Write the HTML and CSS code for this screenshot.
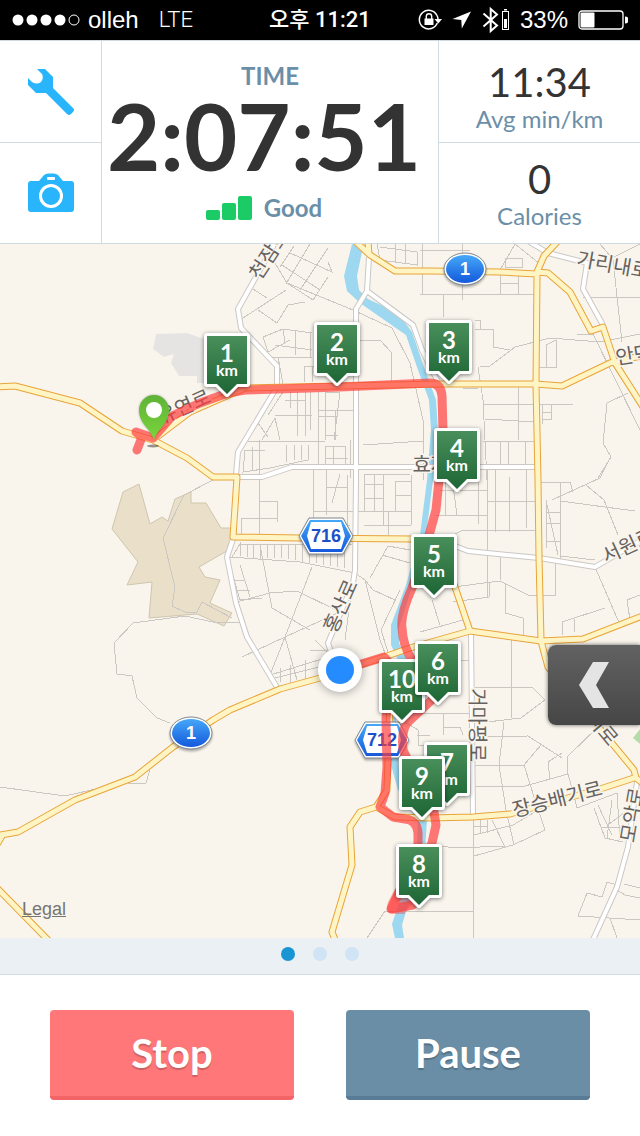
FILE: index.html
```
<!DOCTYPE html>
<html lang="ko">
<head>
    <meta charset="UTF-8">
    <meta name="viewport" content="width=device-width, initial-scale=1">
    <title>Run Tracker</title>
    <link rel="stylesheet" href="styles.css">
</head>
<body>
    <div class="status-bar">
        <div class="status-left">
            <svg width="68" height="12" viewBox="0 0 68 12">
                <g fill="#fff">
                    <circle cx="6" cy="6" r="5.5"/>
                    <circle cx="20" cy="6" r="5.5"/>
                    <circle cx="34" cy="6" r="5.5"/>
                    <circle cx="48" cy="6" r="5.5"/>
                </g>
                <circle cx="62" cy="6" r="5" fill="none" stroke="#fff"/>
            </svg>
            <span class="carrier">olleh</span>
            <span class="network">LTE</span>
        </div>
        <div class="status-time">오후 11:21</div>
        <div class="status-right">
            <svg width="24" height="22" viewBox="0 0 24 22">
                <path d="M19 6.5A9.3 9.3 0 1 0 19.3 14M19 6.5A9 9 0 0 1 20 10" fill="none" stroke="#fff" stroke-width="1.5"/>
                <path d="M16.5 10H24l-3.7 4.5z" fill="#fff"/>
                <rect x="6.5" y="9.500" width="9" height="6.500" fill="#fff"/>
                <path d="M8.300 10V7.500a2.700 2.700 0 0 1 5.400 0V10" fill="none" stroke="#fff" stroke-width="1.400"/>
            </svg>
            <svg width="20" height="18" viewBox="0 0 20 18">
                <path d="M19 0.500 9.800 17.500 9.300 9 0.500 8z" fill="#fff"/>
            </svg>
            <svg width="28" height="28" viewBox="0 0 28 28">
                <path d="M1.500 7.500 15 19.500 8.700 25V3L15 8.500 1.500 20.500" fill="none" stroke="#fff" stroke-width="2"/>
                <rect x="20.500" y="5.500" width="6" height="18" fill="none" stroke="#fff"/>
                <path d="M22 3h3v1.500h-3zM22 13h3v9h-3z" fill="#fff"/>
            </svg>
            <span class="battery-level">33%</span>
            <svg width="50" height="20" viewBox="0 0 50 20">
                <rect x="1" y="1" width="44" height="18" rx="3" fill="none" stroke="#fff" stroke-width="1.300"/>
                <rect x="2.500" y="2.500" width="14" height="15" rx="1" fill="#fff"/>
                <path d="M47 6.500a3.500 3.500 0 0 1 0 7z" fill="#fff"/>
            </svg>
        </div>
    </div>

    <div class="stats">
        <div class="tools">
            <button class="tool" aria-label="Settings">
                <svg width="48" height="48" viewBox="0 0 48 48">
                    <path d="M10 1h8l8 8v11l20 20q2 2 0 4l-2 2q-2 2-4 0L19 25H9L1 17V10l4 4q5 3 9 0 3-4 1-8z" fill="#29b5fb"/>
                </svg>
            </button>
            <button class="tool" aria-label="Camera">
                <svg width="46" height="40" viewBox="0 0 46 40">
                    <path d="M3 8h8l5-6q2-1.500 4-1.500h6q2 0 4 1.500l5 6h8q3 0 3 3v25q0 3-3 3H3q-3 0-3-3V11q0-3 3-3z" fill="#29b5fb"/>
                    <rect x="19" y="4" width="8" height="3" rx="1" fill="#fff"/>
                    <circle cx="23" cy="23" r="10.500" fill="none" stroke="#fff" stroke-width="3"/>
                </svg>
            </button>
        </div>
        <div class="time-panel">
            <div class="time-label">TIME</div>
            <div class="time-value">2:07:51</div>
            <div class="gps">
                <svg width="46" height="24" viewBox="0 0 46 24" fill="#1bcc66">
                    <rect x="0" y="14" width="14" height="10" rx="2"/>
                    <rect x="16" y="7" width="14" height="17" rx="2"/>
                    <rect x="32" y="0" width="14" height="24" rx="2"/>
                </svg>
                <span>Good</span>
            </div>
        </div>
        <div class="side-stats">
            <div class="stat">
                <div class="stat-value">11:34</div>
                <div class="stat-label">Avg min/km</div>
            </div>
            <div class="stat">
                <div class="stat-value">0</div>
                <div class="stat-label">Calories</div>
            </div>
        </div>
    </div>

    <div class="map">
        <svg class="map-canvas" viewBox="0 244 640 694">
            <defs>
                <linearGradient id="pinFill" x1="0" y1="0" x2="0" y2="1">
                    <stop offset="0" stop-color="#488f5b"/>
                    <stop offset="1" stop-color="#1f6636"/>
                </linearGradient>
                <linearGradient id="shieldFill" x1="0" y1="0" x2="0" y2="1">
                    <stop offset="0" stop-color="#45a8f8"/>
                    <stop offset="1" stop-color="#1459dc"/>
                </linearGradient>
                <linearGradient id="startFill" x1="0" y1="0" x2="0" y2="1">
                    <stop offset="0" stop-color="#5fb237"/>
                    <stop offset="1" stop-color="#7ad53c"/>
                </linearGradient>
                <g id="highways">
                    <path d="M-5 387 15 386 80 403 122 431 153 440 187 458 213 477H237L233 537 300 538 412 539 440 545 455 587 470 631"/>
                    <path d="M153 440 190 412 245 388 340 386 440 384H535L562 386 610 363 645 355"/>
                    <path d="M355 241 370 255 395 271H430L500 272 537 274 536 385 538 480 539 557 541 640"/>
                    <path d="M368 241 369 255M558 241 544 256 537 272 548 273 570 292 591 331 603 327 615 363 645 410"/>
                    <path d="M-5 836 18 832 75 800 135 777 173 747 213 720 230 710 280 689 320 678 387 656 410 648 470 631 541 641 583 639 645 615"/>
                    <path d="M-5 848 2 836M-5 886 50 942"/>
                    <path d="M336 942 332 932 352 865 350 827 360 812 376 807 387 790 390 700M376 807 395 817 430 818 473 817 510 814 600 789 634 778"/>
                    <path d="M541 641 548 667 597 725 634 770 636 778 645 785"/>
                </g>
                <g id="roads">
                    <path d="M276 241 238 309 241 328 277 366V387L238 452 236 475"/>
                    <path d="M369 257 367 291 356 309V480L355 570 353 583 328 643 333 658"/>
                    <path d="M367 291 413 325 422 350 438 382M237 477H262L292 467H536"/>
                    <path d="M233 539 227 557 236 603 247 637 278 689"/>
                    <path d="M450 544 468 551 539 558 595 567 645 538M471 633 473 815"/>
                    <path d="M528 241 548 253 587 263 583 289 603 325M637 782 628 847 617 887 592 942"/>
                </g>
                <g id="pin">
                    <path class="pin-outline" d="M-20-58H20V-10H10L0 0-10-10H-20Z"/>
                    <path d="M-20-58H20V-10H10L0 0-10-10H-20Z" fill="url(#pinFill)"/>
                </g>
                <g id="ovalShield">
                    <ellipse class="shield-edge" rx="21" ry="16"/>
                    <ellipse rx="19" ry="14" fill="url(#shieldFill)"/>
                </g>
                <g id="hexShield">
                    <path class="shield-edge" d="M-17-18H17L27 0 17 18H-17L-27 0Z"/>
                    <path d="M-16-16H16L25 0 16 16H-16L-25 0Z" fill="url(#shieldFill)"/>
                    <path d="M-15-14H15L19 0 15 13H-15L-19 0Z" fill="#fff"/>
                </g>
            </defs>

            <!-- land -->
            <path class="land" d="M123 492 139 484 150 524 162 517 168 521 175 499 191 492V503H206L221 528H232V548L199 567 205 577 220 580 210 603 232 613 224 626 197 614 149 618 152 582 127 585 138 562 112 529Z"/>
            <path fill="#e6e4e3" d="M156 334 187 333 215 343V383H197V376H179L171 363 174 354 164 357 153 349Z"/>
            <path fill="#b5dca8" d="M633 738 640 729V744Z"/>

            <!-- river -->
            <path class="river" d="M352 244 363 247 357 276 359 290 368 299 398 313 412 332 425 370 436 400 438 430 433 480 426 536 412 587 399 627V643L408 662 396 720 399 770 408 790 427 820 425 850 408 905 402 925 404 938H395L392 924 400 900 417 850 418 822 398 790 391 765 390 720 399 662 391 645V625L406 585 420 535 427 480 431 430 429 400 418 370 406 335 380 317 360 303 347 291 344 276Z"/>

            <!-- streets -->
            <g class="streets">
                <path d="M294 246 280 267M310 244 286 284M328 248 300 290M328 277 313 300 287 283M290 253 332 272 328 262M282 265 320 290M273 260 287 283 353 310 392 328 410 363 423 420V480M286 290 240 320M258 310 277 323 288 305 305 302M250 287 267 298"/>
                <path d="M263 337 283 329 312 333M263 337 268 352 290 340M275 345 312 350M283 329 285 343M295 330V355M272 357H312M278 357 283 384M310 333V357M360 340H380L391 352V382M304 366V382M312 366V382M304 366H318"/>
                <path d="M283 392 268 415M290 392V408M297 392V436M305 392V436M310 392V430M318 392V470M285 400H305M275 415H312M318 410H355M325 392V440M335 410V440M325 392H340L334 440M318 416H338M325 435H338"/>
                <path d="M258 423 268 437M262 440 275 418 280 440M248 441H325M325 446V469M333 446V469M325 446H345V469M325 458H348M245 450 243 472 270 468 308 460V445M245 450H265M252 447V470M286 445V462M294 445V460M301 445V460M363 445 423 441M350 440V478"/>
                <path d="M422 244V294M420 250H470M420 294H535M500 275V294M518 276V294M500 283H518M462 244V300M443 295V317M500 270 515 244 540 264M505 267V258H522V267ZM377 244 380 260 417 265V252L380 247M395 244V262M405 244V264"/>
                <path d="M475 329H493V347L510 350M475 320H480V329M480 367 490 366 515 347 550 338 600 342 640 334M478 367 483 400 487 480M538 367H556V340M546 367V345L556 340M483 404H535M463 388H478M485 419 535 422M518 385V440M540 404H573M542 404V424M542 412H551V404M542 419H551V412"/>
                <path d="M483 441H535M500 441V466M508 441V466M525 441V466M577 334H593L640 430M607 403 603 443 611 457 598 478M607 403 628 393M583 297H640M613 260 622 342M600 244 612 258 640 244"/>
                <path d="M259 440V535M259 501H277V522M241 535V518H277M313 470V525M326 470V515M340 474 332 503M326 487H347M313 511H412M313 525H350M347 475V525M364 474H410M364 484H383M364 498H383M364 511V474M374 474V511M383 474V525M395 481V511M395 481H411M395 495H411M388 511V535M411 475V525M364 525H411"/>
                <path d="M240 544H352M232 557 240 544V556M247 545V557M253 545V558M260 545V560M267 545V558M274 545V558M281 545V558M288 545V559M295 545V560M302 545V562M309 545V563M316 545V563M323 545V565M330 545V566M337 545V567M344 545V568M230 557 300 562 355 573M260 545 272 608 310 630M233 603 270 593 297 591 340 612 285 637 242 657M312 567 285 637 297 680M230 565 240 600 262 598M240 565 250 597M235 580H245M236 590H250M285 637 270 675 335 655M275 678 335 663M280 668V682M290 665V685M305 660V680M315 640 335 660M310 650H328"/>
                <path d="M355 573 365 580 373 590 395 600M410 550 388 546 370 578M382 555 410 563M365 580 380 640 385 653M353 580 345 640M400 590 381 630 388 652"/>
                <path d="M213 480 184 495 163 538 175 587 172 606 185 612H197L202 602 232 618M240 622 213 622 185 616 133 623 114 643 117 674 132 676 137 698 157 718 170 723M0 787 65 796 100 788M150 770 146 783H128"/>
                <path d="M440 490H487M487 470V597M478 470V524M495 470V532M509 477V532M526 470V528M487 501H537M436 515H487M455 534 463 530H535M540 482H560V560M560 482H570L573 492M546 500V548M546 500 558 555M546 512H560M546 523H560M546 541H560M552 500 600 478 608 462M586 485 604 500 618 535M560 501 635 511"/>
                <path d="M500 556V580M453 587 500 581 528 595H555V563M489 583V597L453 602M505 583V613L523 618V635M562 635V622L605 608M574 619V632M595 567 620 625M640 595 627 600 630 620M511 640V718M473 687H532L545 700 521 718 487 722 475 715M445 480V515M453 485 457 515M420 632 463 620M432 600 440 625M461 660H471M560 556 595 560"/>
                <path d="M420 713H470M443 713V735M443 727H460L463 735M475 737 528 736 562 758M541 745 524 765 535 800 545 830 513 845 474 856M504 722 499 765 506 810 514 845M473 765H524M562 753 548 762 550 780M475 786H525L568 774M600 725 567 757V770L577 808 617 793M474 835 513 825 535 812M480 820V833M487 820V833M474 826H487M492 820 505 847"/>
                <path d="M405 722 418 730V745H430M417 735H430M420 843 455 848 505 846M385 911H473M473 820V938M594 808 605 838 623 842M598 805 612 835M612 800 607 838M617 793 620 840M602 827H625M608 825 625 812M617 885 607 882 602 897 587 893 578 916 640 920M610 918 617 938M624 884 640 888M617 890 625 895 640 898M385 911 367 938"/>
            </g>

            <!-- roads, casing first and surface on top -->
            <use class="road-casing" href="#roads"/>
            <use class="road-surface" href="#roads"/>
            <use class="highway-casing" href="#highways"/>
            <use class="highway-surface" href="#highways"/>

            <g class="road-names">
                <text transform="translate(275 258) rotate(-57)">천잠로</text>
                <text transform="translate(187 413) rotate(-24)">유연로</text>
                <text transform="translate(440 472)">효자로</text>
                <text transform="translate(347 609) rotate(-66)">홍산로</text>
                <text transform="translate(470 725) rotate(90)">거마평로</text>
                <text transform="translate(559 806) rotate(-14)">장승배기로</text>
                <text transform="translate(631 552) rotate(-25)">서원로</text>
                <text transform="translate(612 272) rotate(10)">가리내로</text>
                <text transform="translate(653 359) rotate(-9)">안덕원로</text>
                <text transform="translate(639 816) rotate(-80)">모악로</text>
                <text transform="translate(585 719) rotate(50)">용머리로</text>
            </g>

            <!-- route shields -->
            <g class="oval-label">
                <use href="#ovalShield" x="465" y="269"/>
                <text x="465" y="275">1</text>
                <use href="#ovalShield" x="191" y="733"/>
                <text x="191" y="739">1</text>
            </g>
            <g class="hex-label">
                <use href="#hexShield" x="326" y="536"/>
                <text x="326" y="542">716</text>
                <use href="#hexShield" x="382" y="740"/>
                <text x="382" y="746">712</text>
            </g>

            <!-- run track -->
            <path class="track" d="M137 450 142 437 136 432 153 438 172 416 200 403 228 393 245 390 340 387 430 383Q441 383 442 396L443 430 439 480 436 510 425 550 412 588Q400 615 402 628 403 646 412 660L437 695 407 723Q401 732 403 750L420 785 434 812 436 825 432 843 420 880 413 905 391 909 405 880 418 850 418 833Q417 820 405 819L393 817 380 807 385 793 387 767 386 720Q387 690 400 675L384 657 345 669"/>
            <path class="track-end" d="M405 870 388 902Q384 914 395 914H404L414 902 420 870Z"/>

            <!-- start pin -->
            <ellipse cx="153" cy="446" rx="6" ry="1.500" fill="#000" opacity=".4"/>
            <path class="start-pin" d="M154 440C151 429 139 424 139 410a15 15 0 0 1 30 0c0 14-12 19-15 30z"/>
            <circle cx="154" cy="410" r="8" fill="#fff"/>

            <!-- current position -->
            <circle class="position-ring" cx="340" cy="670" r="22"/>
            <circle cx="340" cy="670" r="14" fill="#258cff"/>

            <!-- kilometre pins -->
            <g class="pins">
                <g transform="translate(227 394)"><use href="#pin"/><text y="-32">1</text><text class="unit" y="-18">km</text></g>
                <g transform="translate(337 383)"><use href="#pin"/><text y="-32">2</text><text class="unit" y="-18">km</text></g>
                <g transform="translate(449 381)"><use href="#pin"/><text y="-32">3</text><text class="unit" y="-18">km</text></g>
                <g transform="translate(457 489)"><use href="#pin"/><text y="-32">4</text><text class="unit" y="-18">km</text></g>
                <g transform="translate(434 595)"><use href="#pin"/><text y="-32">5</text><text class="unit" y="-18">km</text></g>
                <g transform="translate(402 720)"><use href="#pin"/><text y="-32">10</text><text class="unit" y="-18">km</text></g>
                <g transform="translate(438 702)"><use href="#pin"/><text y="-32">6</text><text class="unit" y="-18">km</text></g>
                <g transform="translate(447 803)"><use href="#pin"/><text y="-32">7</text><text class="unit" y="-18">km</text></g>
                <g transform="translate(422 817)"><use href="#pin"/><text y="-32">9</text><text class="unit" y="-18">km</text></g>
                <g transform="translate(419 905)"><use href="#pin"/><text y="-32">8</text><text class="unit" y="-18">km</text></g>
            </g>
        </svg>
        <button class="drawer" aria-label="Open panel">
            <svg width="30" height="46" viewBox="0 0 30 46">
                <path d="M14 0H30L17 23 30 46H14L0 23Z" fill="#e4e4e4"/>
            </svg>
        </button>
        <a class="legal" href="#legal">Legal</a>
    </div>

    <div class="pager">
        <span class="dot active"></span>
        <span class="dot"></span>
        <span class="dot"></span>
    </div>

    <div class="actions">
        <button class="action stop">Stop</button>
        <button class="action pause">Pause</button>
    </div>
</body>
</html>
```
FILE: styles.css
```
* {
    margin: 0;
    padding: 0;
    box-sizing: border-box;
}

body {
    min-height: 100vh;
    display: flex;
    flex-direction: column;
    background-color: #ffffff;
    font-family: Lato, "Noto Sans CJK KR", sans-serif;
}

button {
    border: none;
    background: none;
    font-family: inherit;
    cursor: pointer;
}

/* status bar */
.status-bar {
    height: 40px;
    padding: 0 12px;
    display: grid;
    grid-template-columns: 1fr auto 1fr;
    align-items: center;
    background-color: #000000;
    color: #ffffff;
    font-family: "Liberation Sans", "Noto Sans CJK KR", sans-serif;
    font-size: 24px;
    line-height: 40px;
}

.status-left,
.status-right {
    display: flex;
    align-items: center;
    gap: 8px;
}

.status-right {
    justify-content: flex-end;
    gap: 10px;
}

.network {
    margin-left: 12px;
    font-family: Roboto, sans-serif;
    font-size: 22px;
    font-weight: 300;
}

.status-time {
    font-family: Roboto, "Noto Sans CJK KR", sans-serif;
    font-size: 22px;
    font-weight: 500;
}

/* header stats */
.stats {
    display: grid;
    grid-template-columns: 102px 1fr 202px;
    height: 204px;
    border-top: 1px solid #d0dae1;
    border-bottom: 1px solid #d0dae1;
}

.tools,
.side-stats {
    display: grid;
    grid-template-rows: 102px 1fr;
}

.tools {
    border-right: 1px solid #d0dae1;
}

.side-stats {
    border-left: 1px solid #d0dae1;
}

.tool,
.stat {
    display: flex;
    align-items: center;
    justify-content: center;
}

.tool:first-child,
.stat:first-child {
    border-bottom: 1px solid #d0dae1;
}

.tool svg {
    display: block;
}

.time-panel {
    display: flex;
    flex-direction: column;
    align-items: center;
    justify-content: center;
    color: #6b8fa8;
    font-size: 24px;
    font-weight: 700;
    line-height: 28px;
}

.time-value,
.gps {
    padding-right: 12px;
}

.time-value {
    color: #333333;
    font-size: 92px;
    line-height: 92px;
}

.gps {
    margin-top: 12px;
    display: flex;
    align-items: center;
    gap: 12px;
}

.stat {
    flex-direction: column;
    gap: 2px;
    padding-top: 2px;
}

.stat:first-child {
    padding-top: 10px;
}

.stat-value {
    color: #333333;
    font-size: 40px;
    line-height: 42px;
}

.stat-label {
    color: #6b8fa8;
    font-size: 24px;
    line-height: 28px;
}

/* map */
.map {
    flex: 1;
    position: relative;
    overflow: hidden;
    background-color: #f9f5ed;
}

.map-canvas {
    display: block;
    width: 100%;
}

.land {
    fill: #eadfc8;
    stroke: #cfc6b0;
}

.river {
    fill: #9dd8f0;
}

.streets {
    fill: none;
    stroke: #cbc8c3;
    shape-rendering: crispEdges;
}

.road-casing,
.road-surface,
.highway-casing,
.highway-surface {
    fill: none;
    stroke-linejoin: round;
}

.road-casing {
    stroke: #cbc8c5;
    stroke-width: 6px;
}

.road-surface {
    stroke: #ffffff;
    stroke-width: 4px;
}

.highway-casing {
    stroke: #e8a43a;
    stroke-width: 7px;
}

.highway-surface {
    stroke: #fff4c4;
    stroke-width: 5px;
}

.road-names {
    fill: #66625f;
    stroke: #f9f5ed;
    stroke-width: 3px;
    paint-order: stroke;
    font-family: "Noto Sans CJK KR", sans-serif;
    font-size: 20px;
    text-anchor: middle;
}

.shield-edge {
    fill: #ffffff;
    stroke: #7d858f;
    filter: drop-shadow(0 2px 1px rgba(0,0,0,0.3));
}

.oval-label,
.hex-label {
    font-family: "Liberation Sans", sans-serif;
    font-size: 18px;
    font-weight: 700;
    text-anchor: middle;
}

.oval-label {
    fill: #ffffff;
}

.hex-label {
    fill: #1c50c8;
}

.track {
    fill: none;
    stroke: #ff3a3a;
    stroke-width: 9px;
    stroke-linecap: round;
    stroke-linejoin: round;
    opacity: 0.68;
}

.track-end {
    fill: #ff3a3a;
    opacity: 0.4;
}

.start-pin {
    fill: url(#startFill);
    filter: drop-shadow(0 0 1px rgba(0,0,0,0.3));
}

.position-ring {
    fill: #ffffff;
    filter: drop-shadow(0 1px 5px rgba(0,0,0,0.35));
}

.pin-outline {
    fill: #ffffff;
    stroke: #ffffff;
    stroke-width: 6px;
    stroke-linejoin: round;
    filter: drop-shadow(0 1px 2px rgba(0,0,0,0.5));
}

.pins {
    fill: #ffffff;
    font-size: 24px;
    font-weight: 700;
    text-anchor: middle;
}

.unit {
    font-size: 16px;
}

.drawer {
    position: absolute;
    right: 0;
    bottom: 213px;
    width: 92px;
    height: 80px;
    display: flex;
    align-items: center;
    justify-content: center;
    border-radius: 8px 0 0 8px;
    background: linear-gradient(#626262, #464646);
    box-shadow: 0 0 4px rgba(0,0,0,0.6);
}

.legal {
    position: absolute;
    left: 22px;
    bottom: 18px;
    color: #777572;
    font-family: "Liberation Sans", sans-serif;
    font-size: 18px;
    line-height: 22px;
}

/* page dots */
.pager {
    height: 37px;
    padding-bottom: 4px;
    display: flex;
    align-items: center;
    justify-content: center;
    gap: 18px;
    background-color: #eaf0f3;
    border-bottom: 1px solid #d0dce2;
}

.dot {
    width: 14px;
    height: 14px;
    border-radius: 50%;
    background-color: #d0e4f5;
}

.dot.active {
    background-color: #1a95d3;
}

/* bottom buttons */
.actions {
    padding: 35px 50px 36px;
    display: flex;
    gap: 52px;
}

.action {
    flex: 1;
    height: 90px;
    border-radius: 4px;
    color: #ffffff;
    font-size: 40px;
    font-weight: 700;
    text-shadow: 0 2px 1px rgba(0,0,0,0.2);
}

.stop {
    background-color: #ff7779;
    border-bottom: 4px solid #f36466;
}

.pause {
    background-color: #698ea6;
    border-bottom: 4px solid #587c95;
}
```
